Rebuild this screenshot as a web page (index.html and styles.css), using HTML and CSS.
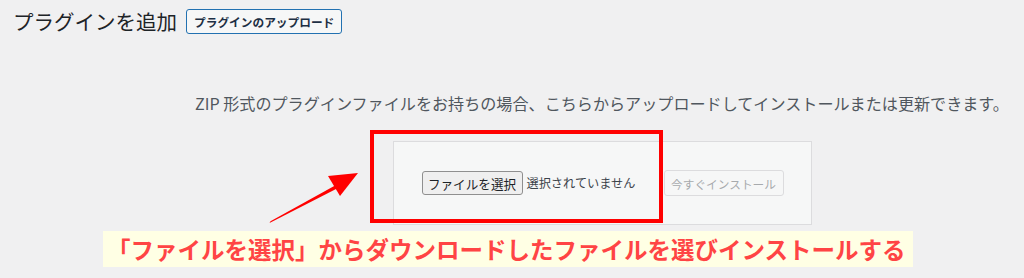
FILE: index.html
```html
<!DOCTYPE html>
<html lang="ja">
<head>
<meta charset="utf-8">
<title>プラグインを追加</title>
<link rel="stylesheet" href="styles.css">
</head>
<body>
<div class="page">
  <div class="header">
    <h1 class="title">プラグインを追加</h1>
    <a class="upload-btn">プラグインのアップロード</a>
  </div>
  <div class="content">
    <p class="install-help">ZIP 形式のプラグインファイルをお持ちの場合、こちらからアップロードしてインストールまたは更新できます。</p>
    <div class="upload-form">
      <div class="file-field">
        <span class="file-btn">ファイルを選択</span>
        <span class="file-name">選択されていません</span>
      </div>
      <span class="install-btn">今すぐインストール</span>
      <div class="highlight"></div>
    </div>
  </div>
  <div class="banner">「ファイルを選択」からダウンロードしたファイルを選びインストールする</div>
  <svg class="arrow" width="100" height="62" viewBox="0 0 100 62">
    <polygon points="4.5,58 5.5,56.2 71,20 73,23" fill="#ff0000"/>
    <polygon points="93,8 63,11 75,31" fill="#ff0000"/>
  </svg>
</div>
</body>
</html>
```
FILE: styles.css
```css
html, body {
  margin: 0;
  padding: 0;
  background: #f0f0f1;
}
body {
  font-family: "Noto Sans CJK JP", "Noto Sans", sans-serif;
  color: #1d2327;
}
.page {
  position: relative;
  width: 1024px;
  height: 278px;
  overflow: hidden;
}
.header {
  display: flex;
  align-items: center;
  gap: 9px;
  padding: 9px 0 0 13px;
  height: 25px;
}
.title {
  margin: 0;
  font-size: 20.5px;
  font-weight: 400;
  line-height: 25px;
  color: #1d2327;
}
.upload-btn {
  display: flex;
  align-items: center;
  box-sizing: border-box;
  height: 25px;
  padding: 0 7px;
  border: 1px solid #2271b1;
  border-radius: 3px;
  background: #f6f7f7;
  color: #1d2f44;
  font-size: 11.7px;
  font-weight: 700;
}
.content {
  margin-left: 180px;
  display: flex;
  flex-direction: column;
  align-items: center;
}
.install-help {
  margin: 58px 0 0;
  font-size: 16.1px;
  line-height: 22px;
  color: #50575e;
  white-space: nowrap;
}
.upload-form {
  position: relative;
  margin-top: 27px;
  box-sizing: border-box;
  width: 419px;
  height: 84px;
  padding: 0 27px 0 28px;
  border: 1px solid #dcdcde;
  background: #f6f7f7;
  display: flex;
  align-items: center;
  justify-content: space-between;
}
.file-field {
  display: flex;
  align-items: center;
  gap: 4px;
}
.file-btn {
  box-sizing: border-box;
  height: 24px;
  width: 101px;
  display: flex;
  align-items: center;
  justify-content: center;
  border: 1px solid #8f8f8f;
  border-radius: 3px;
  background: #efefef;
  color: #1d2327;
  font-size: 12.6px;
}
.file-name {
  font-size: 12.2px;
  color: #3c434a;
}
.install-btn {
  box-sizing: border-box;
  height: 26px;
  width: 120px;
  display: flex;
  align-items: center;
  justify-content: center;
  border: 1px solid #dcdcde;
  border-radius: 3px;
  background: #f6f7f7;
  color: #a7aaad;
  font-size: 11.7px;
}
.highlight {
  position: absolute;
  left: -24px;
  top: -12px;
  width: 293px;
  height: 93px;
  box-sizing: border-box;
  border: 4px solid #ff0000;
}
.banner {
  margin: 6px 0 0 103px;
  width: 810px;
  box-sizing: border-box;
  height: 36px;
  padding: 0 4px;
  background: #ffffe4;
  color: #ff4444;
  font-size: 23.5px;
  font-weight: 700;
  line-height: 36px;
  white-space: nowrap;
}
.arrow {
  position: absolute;
  left: 265px;
  top: 165px;
}
```
